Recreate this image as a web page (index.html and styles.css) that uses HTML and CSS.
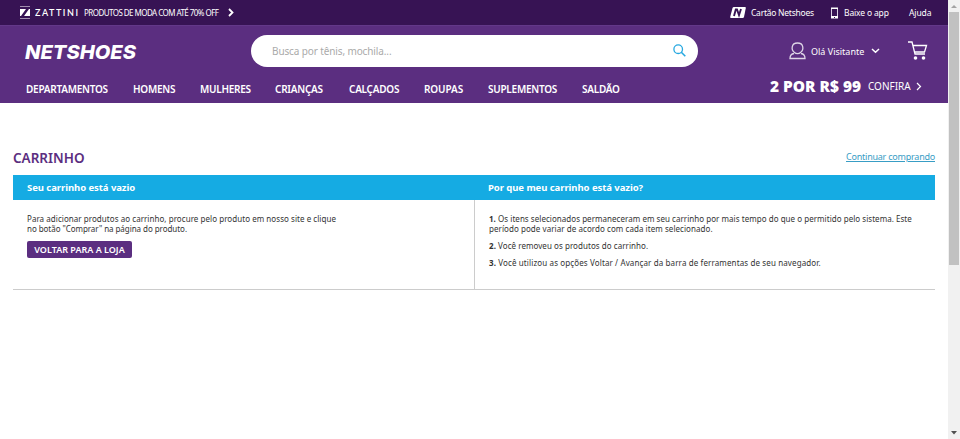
FILE: index.html
```html
<!DOCTYPE html>
<html lang="pt-BR">
<head>
<meta charset="utf-8">
<title>Netshoes - Carrinho</title>
<link rel="stylesheet" href="styles.css">
</head>
<body>
<div class="page">
  <header>
    <div class="topbar">
      <svg class="z-icon" width="10" height="13" viewBox="0 0 10 13"><path d="M0 .5h10M0 12.500h10" stroke="#a18eae"/><path d="M0 3h6L1 10H0zM9 3h1v7H4z" fill="#fff"/></svg>
      <svg class="zattini" width="45" height="13"><text x="0" y="10.300" textLength="43">ZATTINI</text></svg>
      <span class="promo">PRODUTOS DE MODA COM ATÉ 70% OFF</span>
      <svg width="6" height="9" viewBox="0 0 6 9"><path d="M1 1l3.500 3.500L1 8" fill="none" stroke="#fff" stroke-width="1.800"/></svg>
      <svg class="card-icon" width="16" height="11" viewBox="0 0 16 11"><path d="M4 0h11q1 0 .8 1L14 10q-.3 1-1.300 1H1q-1 0-.8-1L2.500 1Q2.800 0 4 0z" fill="#fff"/><path d="M4 9L5.800 2.500H7L9 8l2-6" fill="none" stroke="#371354" stroke-width="1.900"/></svg>
      <span class="card-text">Cartão Netshoes</span>
      <svg width="7" height="12" viewBox="0 0 7 12"><path d="M.5 1v10M6.500 1v10" stroke="#d8cee0"/><path d="M0 2h7V.5H0zM0 9h7v2.500H0z" fill="#fff"/><path d="M3 10.500h1" stroke="#371354"/></svg>
      <span class="app-text">Baixe o app</span>
      <span class="help">Ajuda</span>
    </div>
    <div class="masthead">
      <div class="brand-row">
        <svg class="logo" width="114" height="30"><text x="1" y="22.500" textLength="111" lengthAdjust="spacingAndGlyphs">NETSHOES</text></svg>
        <div class="search"><span>Busca por tênis, mochila...</span><svg width="13" height="13" viewBox="0 0 13 13"><circle cx="5.200" cy="5.200" r="4.300" fill="none" stroke="#27a8e0" stroke-width="1.300"/><path d="M8.300 8.300l4 4" stroke="#27a8e0" stroke-width="1.600"/></svg></div>
        <svg class="user" width="17" height="18" viewBox="0 0 17 18"><path d="M5.500 10.500C2 8 2 1 8.500 1s6.500 7 3 9.500C10 12 7 12 5.500 10.500zM5 11.500Q1 12 1 16.500h15q0-4.500-4-5" fill="none" stroke="#ded5e6" stroke-width="1.300"/></svg>
        <span class="hello">Olá Visitante</span>
        <svg class="down" width="9" height="6" viewBox="0 0 9 6"><path d="M1 1l3.500 3.300L8 1" fill="none" stroke="#fff" stroke-width="1.500"/></svg>
        <svg class="cart" width="20" height="20" viewBox="0 0 20 20"><path d="M0 1h4l3 12h10M5 4.500h13.500L16.500 11H6.500" fill="none" stroke="#fff" stroke-width="1.300"/><circle cx="7.500" cy="17" r="1.800" fill="#fff"/><circle cx="15.500" cy="17" r="1.800" fill="#fff"/></svg>
      </div>
      <nav>
        <a class="n1">DEPARTAMENTOS</a><a class="n2">HOMENS</a><a class="n3">MULHERES</a><a class="n4">CRIANÇAS</a><a class="n5">CALÇADOS</a><a class="n6">ROUPAS</a><a class="n7">SUPLEMENTOS</a><a class="n8">SALDÃO</a>
        <svg class="offer" width="93" height="20"><text x="0" y="15" textLength="91" lengthAdjust="spacingAndGlyphs">2 POR R$ 99</text></svg>
        <span class="confira">CONFIRA</span>
        <svg width="6" height="9" viewBox="0 0 6 9"><path d="M1 1l3.500 3.500L1 8" fill="none" stroke="#fff" stroke-width="1.200"/></svg>
      </nav>
    </div>
  </header>
  <main>
    <div class="heading"><h1>CARRINHO</h1><a>Continuar comprando</a></div>
    <div class="titles"><h2 class="t1">Seu carrinho está vazio</h2><h2 class="t2">Por que meu carrinho está vazio?</h2></div>
    <div class="panels">
      <section class="left">
        <p><span class="p1">Para adicionar produtos ao carrinho, procure pelo produto em nosso site e clique</span><br><span class="p2">no botão "Comprar" na página do produto.</span></p>
        <a class="button">VOLTAR PARA A LOJA</a>
      </section>
      <section class="right">
        <p><span class="p3"><b>1.</b> Os itens selecionados permaneceram em seu carrinho por mais tempo do que o permitido pelo sistema. Este</span><br><span class="p4">período pode variar de acordo com cada item selecionado.</span></p>
        <p><span class="p5"><b>2.</b> Você removeu os produtos do carrinho.</span></p>
        <p><span class="p6"><b>3.</b> Você utilizou as opções Voltar / Avançar da barra de ferramentas de seu navegador.</span></p>
      </section>
    </div>
  </main>
</div>
<aside class="scrollbar">
  <svg width="12" height="12"><path d="M3 8l3-3 3 3z" fill="#a3a3a3"/></svg>
  <div class="thumb"></div>
  <svg class="bottom" width="12" height="12"><path d="M3 4h6L6 7.500z" fill="#505050"/></svg>
</aside>
</body>
</html>
```
FILE: styles.css
```css
* { box-sizing: border-box; }
body { margin: 0; display: flex; height: 439px; overflow: hidden; background: #fff; font-family: "Noto Sans", sans-serif; }
svg { flex: none; display: block; }
span, a, h1, h2 { white-space: nowrap; }
.page { width: 948px; flex: none; }
.topbar { height: 25px; padding-left: 20px; display: flex; align-items: center; background: #371354; color: #fff; font-size: 8.500px; }
.zattini { margin-left: 5px; }
.zattini text { font: 600 9px Lato, sans-serif; fill: #fff; }
.promo { width: 135px; margin: 0 9px 0 4px; font-size: 8px; letter-spacing: -.55px; }
.card-icon { margin-left: 496px; }
.card-text { width: 63px; margin: 0 17px 0 5px; letter-spacing: -.25px; }
.app-text { width: 45px; margin: 0 20px 0 6px; letter-spacing: -.15px; }
.help { letter-spacing: -.1px; }
.masthead { height: 78px; background: #5b2e80; border-top: 1px solid #633889; color: #fff; }
.brand-row { height: 50px; padding-left: 24px; display: flex; align-items: center; }
.logo text { font: italic 800 19px Inter, sans-serif; fill: #fff; }
.search { width: 447px; height: 32px; margin: -1px 0 0 112.500px; padding: 0 12px 0 21.500px; display: flex; align-items: center; justify-content: space-between; border-radius: 16px; background: #fff; color: #aaa; font-size: 10px; letter-spacing: -.12px; }
.user { margin-left: 91.500px; }
.hello { width: 53px; margin-left: 5px; font-size: 9px; }
.down { margin-left: 7px; }
.cart { margin-left: 28px; }
nav { display: flex; align-items: center; height: 27px; margin-top: -1px; padding-left: 26px; font-size: 10px; font-weight: 600; letter-spacing: -.25px; }
.n1 { width: 107px; }
.n2 { width: 67px; }
.n3 { width: 75px; }
.n4 { width: 74px; }
.n5 { width: 75px; }
.n6 { width: 64px; letter-spacing: -.1px; }
.n7 { width: 94px; }
.n8 { width: 188px; }
.offer { margin-top: -4px; }
.offer text { font: 900 15px "Noto Sans", sans-serif; fill: #fff; letter-spacing: 0; }
.confira { width: 44px; margin: -6px 4px 0 5px; font-size: 10px; font-weight: 400; letter-spacing: 0; }
.confira + svg { margin-top: -4px; }
main { width: 922px; margin: 45px 0 0 13px; color: #333; }
.heading { height: 27px; display: flex; justify-content: space-between; }
h1 { margin: 0; font-size: 13.500px; line-height: 21px; font-weight: 600; color: #5b2e80; }
.heading a { color: #389dc5; font-size: 9px; line-height: 17px; text-decoration: underline; letter-spacing: -.23px; }
.titles { display: grid; grid-template-columns: 475px 1fr; height: 25px; background: #15abe3; }
h2 { margin: 0; padding-left: 14px; font-size: 9.500px; line-height: 25px; font-weight: 700; color: #fff; letter-spacing: -.06px; }
.t2 { padding-left: 0; }
.panels { display: grid; grid-template-columns: 462px 1fr; height: 90px; border-bottom: 1px solid #ccc; font-size: 8px; line-height: 10px; }
.left { padding: 14px 0 0 14px; border-right: 1px solid #ccc; }
.right { padding: 14px 0 0 14px; }
p { margin: 0 0 7px; }
.p1 { letter-spacing: .05px; }
.p2 { letter-spacing: -.05px; }
.p3 { letter-spacing: .04px; }
.p4 { letter-spacing: .06px; }
.p5 { letter-spacing: .05px; }
.p6 { letter-spacing: .12px; }
.button { display: block; width: 105px; height: 17px; border-radius: 2px; background: #5b2e80; color: #fff; font-size: 9px; font-weight: 600; line-height: 17px; text-align: center; }
.scrollbar { width: 12px; height: 439px; display: flex; flex-direction: column; background: #f1f1f1; }
.thumb { width: 10px; height: 253px; margin-left: 1px; background: #c1c1c1; }
.bottom { margin-top: auto; }
```
